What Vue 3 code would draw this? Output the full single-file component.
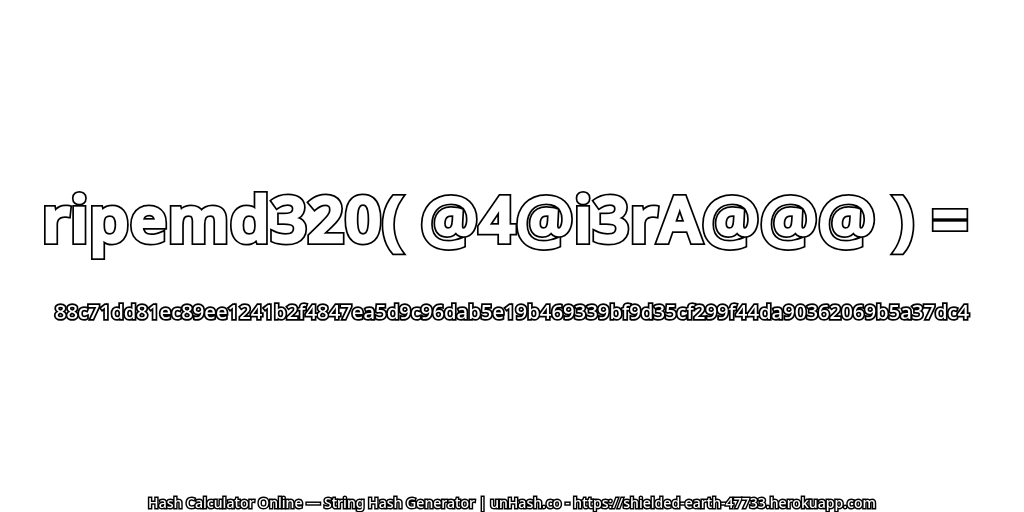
<script setup>
const title = 'ripemd320( @4@i3rA@@@ ) =';
const hash = '88c71dd81ec89ee1241b2f4847ea5d9c96dab5e19b469339bf9d35cf299f44da90362069b5a37dc4';
const footer = 'Hash Calculator Online — String Hash Generator | unHash.co - https://shielded-earth-47733.herokuapp.com';
</script>

<template>
  <main class="page">
    <div class="center">
      <h1 class="title" :data-text="title">{{ title }}</h1>
      <p class="hash">{{ hash }}</p>
    </div>
    <footer class="foot">{{ footer }}</footer>
  </main>
</template>

<style>
html, body { margin: 0; background: #fff; }
</style>

<style scoped>
.page {
  width: 1024px;
  height: 512px;
  display: flex;
  flex-direction: column;
  align-items: center;
  font-family: "Noto Sans", "DejaVu Sans", sans-serif;
  color: #fff;
  overflow: hidden;
  will-change: opacity;
}
.center {
  flex: 1;
  display: flex;
  flex-direction: column;
  align-items: center;
  gap: 39px;
  padding-top: 178px;
}
.title {
  position: relative;
  margin: 0 13px 0 0;
  font-size: 64px;
  font-weight: 600;
  line-height: 80px;
  letter-spacing: 0.6px;
  white-space: nowrap;
  -webkit-text-stroke: 6px #000;
}
.title::after {
  content: attr(data-text);
  position: absolute;
  left: 0;
  top: 0;
  -webkit-text-stroke: 2.5px #fff;
}
.hash {
  margin: 0;
  font-size: 20.3px;
  font-weight: 500;
  line-height: 28px;
  white-space: nowrap;
  -webkit-text-stroke: 3.5px #000;
  paint-order: stroke fill;
}
.foot {
  font-size: 14.1px;
  font-weight: 500;
  line-height: 16px;
  padding-bottom: 1px;
  white-space: nowrap;
  -webkit-text-stroke: 3px #000;
  paint-order: stroke fill;
}
</style>
